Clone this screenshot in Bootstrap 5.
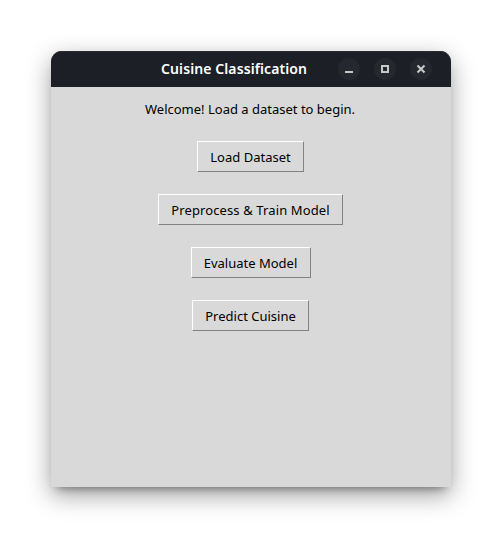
<!DOCTYPE html>
<html lang="en">
<head>
<meta charset="utf-8">
<meta name="viewport" content="width=device-width, initial-scale=1">
<title>Cuisine Classification</title>
<link href="https://cdn.jsdelivr.net/npm/bootstrap@5.3.0/dist/css/bootstrap.min.css" rel="stylesheet">
<style>
body { background: #fff; font-family: "Noto Sans", sans-serif; font-size: 13px; color: #000; padding: 51px; height: 538px; overflow: hidden; }
.app-window { width: 400px; height: 436px; background: #d9d9d9; border-radius: 11px 11px 0 0;
  box-shadow: 0 7px 8px -6px rgba(0,0,0,.38), 0 8px 24px rgba(0,0,0,.38); }
.titlebar { height: 36px; background: #1c1f26; border-radius: 11px 11px 0 0; display: grid; grid-template-columns: 110px 146px 31px 1fr; box-shadow: inset 0 1px 0 #292c32; }
.app-title { color: #fff; font-size: 14px; font-weight: 600; line-height: 36px; white-space: nowrap; letter-spacing: .1px; }
.win-controls { grid-column: 4; gap: 14px; }
.win-btn { width: 22px; height: 22px; border-radius: 50%; background: #25282e; }
.win-btn svg { display: block; }
.status-text { height: 18px; line-height: 18px; margin: 13px 0 23px; padding-right: 2px; white-space: nowrap; }
.tk-actions { gap: 22px; padding-right: 1px; }
.tk-btn { --bs-btn-font-size: 13px; --bs-btn-color: #000; height: 31px; padding: 1px 0 0; line-height: 28px; white-space: nowrap;
  background: #d9d9d9; border: 1px solid; border-color: #fff #828282 #828282 #fff; }
.w-load { width: 107px; } .w-train { width: 185px; letter-spacing: .12px; } .w-eval { width: 120px; } .w-predict { width: 117px; }
</style>
<script src="https://cdn.jsdelivr.net/npm/bootstrap@5.3.0/dist/js/bootstrap.bundle.min.js"></script>
</head>
<body>
<main class="app-window">
  <header class="titlebar align-items-center">
    <span></span>
    <span class="app-title">Cuisine Classification</span>
    <div class="win-controls d-flex">
      <button class="win-btn btn border-0 p-0" aria-label="Minimize"><svg width="22" height="22"><path d="M7 13h8v2H7z" fill="#c8c8c8"/></svg></button>
      <button class="win-btn btn border-0 p-0" aria-label="Maximize"><svg width="22" height="22"><path d="M8 8h6v6H8z" fill="none" stroke="#c8c8c8" stroke-width="2"/></svg></button>
      <button class="win-btn btn border-0 p-0" aria-label="Close"><svg width="22" height="22"><path d="M7.5 7.5l7 7M14.5 7.5l-7 7" fill="none" stroke="#c8c8c8" stroke-width="2.1"/></svg></button>
    </div>
  </header>
  <p class="status-text text-center">Welcome! Load a dataset to begin.</p>
  <div class="tk-actions d-flex flex-column align-items-center">
    <button class="tk-btn w-load btn rounded-0">Load Dataset</button>
    <button class="tk-btn w-train btn rounded-0">Preprocess &amp; Train Model</button>
    <button class="tk-btn w-eval btn rounded-0">Evaluate Model</button>
    <button class="tk-btn w-predict btn rounded-0">Predict Cuisine</button>
  </div>
</main>
</body>
</html>
